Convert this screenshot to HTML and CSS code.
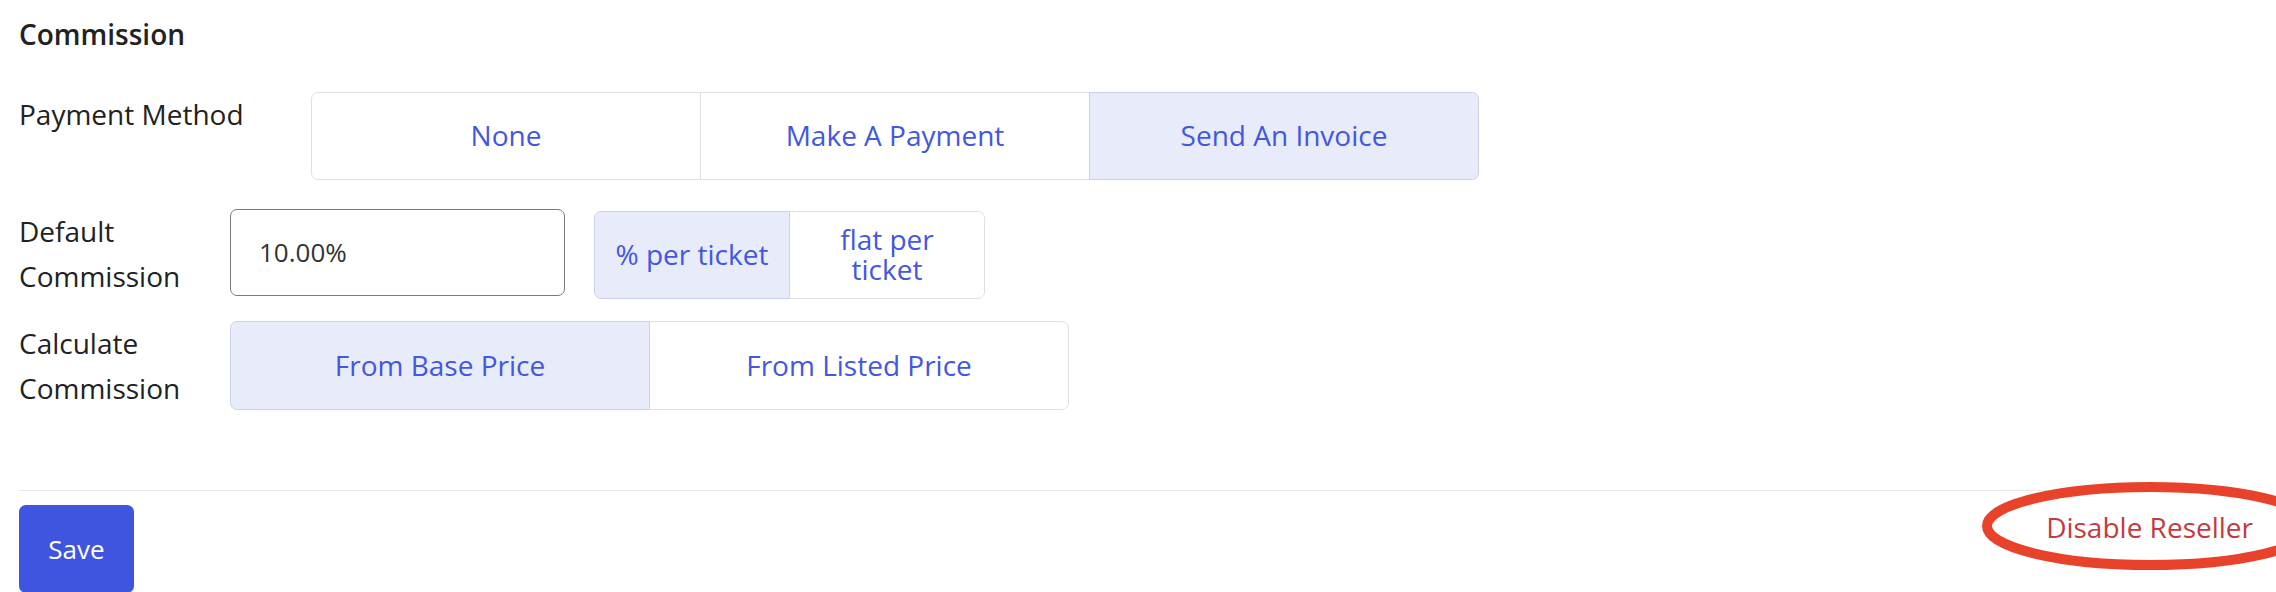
FILE: index.html
```html
<!DOCTYPE html>
<html lang="en">
<head>
    <meta charset="UTF-8">
    <title>Reseller Commission</title>
    <link rel="stylesheet" href="styles.css">
</head>
<body>

<div class="page">
    <h2 class="section-title">Commission</h2>

    <div class="field field-payment">
        <div class="field-label">Payment Method</div>
        <div class="seg seg-payment">
            <button class="seg-item">None</button>
            <button class="seg-item">Make A Payment</button>
            <button class="seg-item active">Send An Invoice</button>
        </div>
    </div>

    <div class="field field-default">
        <div class="field-label">Default Commission</div>
        <input type="text" class="text-input" value="10.00%">
        <div class="seg seg-unit">
            <button class="seg-item active">% per ticket</button>
            <button class="seg-item">flat per<br>ticket</button>
        </div>
    </div>

    <div class="field field-calc">
        <div class="field-label">Calculate Commission</div>
        <div class="seg seg-calc">
            <button class="seg-item active">From Base Price</button>
            <button class="seg-item">From Listed Price</button>
        </div>
    </div>

    <div class="footer">
        <button class="btn-save">Save</button>
        <a href="javascript:;" class="link-danger">Disable Reseller</a>
        <!-- annotation circle drawn over the link -->
        <svg class="mark" width="360" height="110" viewBox="0 0 360 110">
            <ellipse cx="172" cy="55" rx="163" ry="39" fill="none" stroke="#e8432a" stroke-width="10"/>
        </svg>
    </div>
</div>

</body>
</html>
```

FILE: styles.css
```css
body {
    margin: 0;
    font-family: "Open Sans", "Noto Sans", sans-serif;
    color: #222;
    background: #fff;
}
button {
    font-family: inherit;
    cursor: pointer;
}
.page {
    padding: 12px 23px 0 19px;
    position: relative;
}
.section-title {
    margin: 0 0 35px;
    font-size: 28px;
    font-weight: 600;
    line-height: 1.6;
    color: #222;
}
.field {
    display: flex;
    align-items: flex-start;
}
.field-label {
    font-size: 28px;
    line-height: 1.6;
    width: 211px;
    flex: none;
}
.field-payment .field-label {
    width: 292px;
}
.field-payment {
    margin-bottom: 29px;
}
.field-default {
    margin-bottom: 22px;
}
.text-input {
    width: 335px;
    height: 87px;
    box-sizing: border-box;
    border: 1.5px solid #7a7a7a;
    border-radius: 7px;
    padding: 0 28px;
    font-family: inherit;
    font-size: 26px;
    color: #333;
    outline: none;
}
.seg {
    display: flex;
}
.seg-item {
    background: #fff;
    border: 1px solid #dfe0e6;
    margin-left: -1px;
    color: #4357e0;
    font-size: 28px;
    line-height: 1.05;
    padding: 0;
}
.seg-item:first-child {
    margin-left: 0;
    border-radius: 7px 0 0 7px;
}
.seg-item:last-child {
    border-radius: 0 7px 7px 0;
}
.seg-item.active {
    background: #e8ebfa;
    border-color: #ccd1eb;
    position: relative;
}
.seg-payment .seg-item {
    width: 390px;
    height: 88px;
}
.seg-unit {
    margin: 2px 0 0 29px;
}
.seg-unit .seg-item {
    width: 196px;
    height: 88px;
}
.seg-calc .seg-item {
    width: 420px;
    height: 89px;
}
.footer {
    display: flex;
    justify-content: space-between;
    align-items: flex-start;
    margin-top: 80px;
    border-top: 1px solid #e8e9ed;
    padding-top: 14px;
    position: relative;
}
.btn-save {
    background: #4055df;
    color: #fff;
    border: none;
    border-radius: 7px;
    width: 115px;
    height: 88px;
    font-size: 26px;
    line-height: 88px;
    padding: 0;
}
.link-danger {
    color: #c63a3c;
    text-decoration: none;
    font-size: 28px;
    line-height: 1.6;
}
.mark {
    position: absolute;
    left: 1959px;
    top: -20px;
}
```
